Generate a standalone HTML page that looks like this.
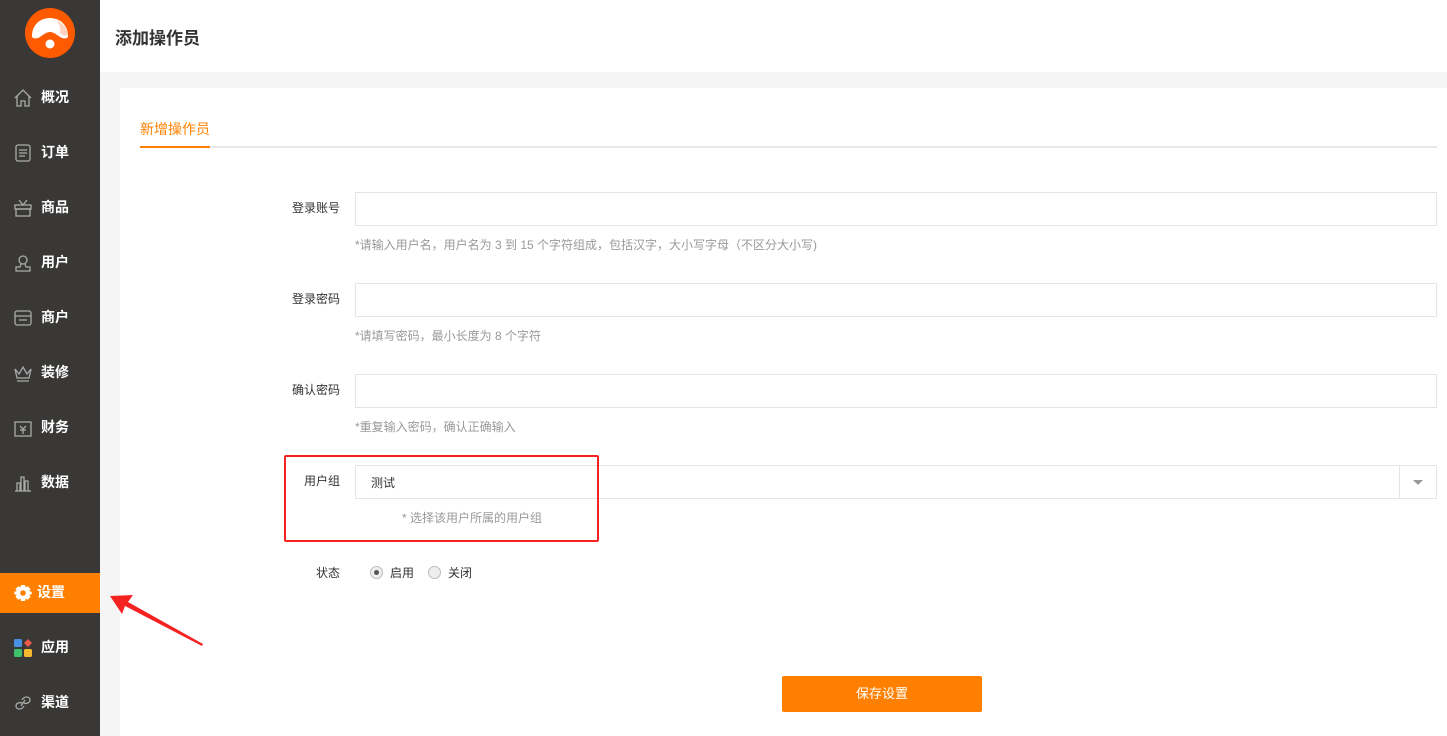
<!DOCTYPE html>
<html><head><meta charset="utf-8"><style>
*{margin:0;padding:0;box-sizing:border-box}
body{width:1447px;height:736px;overflow:hidden;font-family:"Liberation Sans","Noto Sans CJK SC",sans-serif;background:#f5f5f5;position:relative;font-size:12px;color:#333}
.side{position:absolute;left:0;top:0;width:100px;height:736px;background:#393836}
.logo{position:absolute;left:25px;top:8px;width:50px;height:50px;border-radius:50%;background:#ff5a00}
.nav{position:absolute;left:0;width:100px;height:40px;color:#fff;font-size:14px;font-weight:bold;line-height:40px}
.nav span{position:absolute;left:41px;top:-1px}
.nav svg{position:absolute;left:14px;top:11px}
.act{background:#ff8000}
.hdr{position:absolute;left:100px;top:0;right:0;height:72px;background:#fff}
.hdr h1{position:absolute;left:15px;top:24px;font-size:17px;font-weight:bold;color:#333}
.card{position:absolute;left:120px;top:88px;right:0;bottom:0;background:#fff}
.abs{position:absolute}
.lbl{position:absolute;width:100px;text-align:right;left:240px;font-size:12px;color:#333}
.inp{position:absolute;left:355px;width:1082px;height:34px;border:1px solid #e5e5e5;background:#fff}
.hint{position:absolute;left:355px;font-size:12px;color:#999}
.radio{display:inline-block;width:13px;height:13px;border:1px solid #bbb;border-radius:50%;background:#eee;vertical-align:-2px;margin-right:7px;position:relative}
</style></head><body>
<div class="side">
<div class="logo"><svg width="50" height="50" viewBox="0 0 50 50"><path d="M7 28 C7 17 15 10 25 10 C35 10 43 17 43 28 C43 31 38 31 35 29 C31 26 28 24 25 24 C22 24 19 26 15 29 C12 31 7 31 7 28Z" fill="#fff"/><path d="M31 12 C38 15 42 20 43 27 C40 28 37 27 35 25 C36 20 34 15 31 12Z" fill="#ffd3c0"/><circle cx="25" cy="36" r="4.5" fill="#fff"/></svg></div>
<div class="nav" style="top:78px"><svg width="18" height="18" viewBox="0 0 18 18" fill="none" stroke="#aaa" stroke-width="1.3"><path d="M1 9 L9 1 L17 9 M3 7 V17 H7 V12 H11 V17 H15 V7"/></svg><span>概况</span></div>
<div class="nav" style="top:133px"><svg width="18" height="18" viewBox="0 0 18 18" fill="none" stroke="#aaa" stroke-width="1.3"><rect x="2" y="1" width="14" height="16" rx="2"/><path d="M5 6h8M5 9h8M5 12h6"/></svg><span>订单</span></div>
<div class="nav" style="top:188px"><svg width="18" height="18" viewBox="0 0 18 18" fill="none" stroke="#aaa" stroke-width="1.3"><rect x="1" y="6" width="16" height="4"/><rect x="2" y="10" width="14" height="7"/><path d="M9 6 L5 1 M9 6 L13 1"/></svg><span>商品</span></div>
<div class="nav" style="top:243px"><svg width="18" height="18" viewBox="0 0 18 18" fill="none" stroke="#aaa" stroke-width="1.3"><circle cx="9" cy="6" r="4"/><path d="M7 10 L6 13 H2 V17 H16 V13 H12 L11 10"/></svg><span>用户</span></div>
<div class="nav" style="top:298px"><svg width="18" height="18" viewBox="0 0 18 18" fill="none" stroke="#aaa" stroke-width="1.3"><rect x="1" y="2" width="16" height="14" rx="2"/><path d="M1 7h16M5 11h8"/></svg><span>商户</span></div>
<div class="nav" style="top:353px"><svg width="18" height="18" viewBox="0 0 18 18" fill="none" stroke="#aaa" stroke-width="1.3"><path d="M1 5 L5 10 L9 3 L13 10 L17 5 L15 14 H3Z M3 17h12"/></svg><span>装修</span></div>
<div class="nav" style="top:408px"><svg width="18" height="18" viewBox="0 0 18 18" fill="none" stroke="#aaa" stroke-width="1.3"><rect x="1" y="3" width="16" height="14"/><path d="M6 7 L9 10 L12 7 M9 10 V15 M6 11h6"/></svg><span>财务</span></div>
<div class="nav" style="top:463px"><svg width="18" height="18" viewBox="0 0 18 18" fill="none" stroke="#aaa" stroke-width="1.3"><path d="M1 17h16M3 17V9h3v8M7 17V3h3v14M11 17V7h3v10"/></svg><span>数据</span></div>
<div class="nav act" style="top:573px"><svg width="18" height="18" viewBox="0 0 18 18"><path fill="#fff" d="M7 1h4l.6 2.4 2.1-1.2 2.8 2.8-1.2 2.1L17.7 7.7v2.6l-2.4.6 1.2 2.1-2.8 2.8-2.1-1.2L11 17H7l-.6-2.4-2.1 1.2-2.8-2.8 1.2-2.1L.3 10.3V7.7l2.4-.6-1.2-2.1 2.8-2.8 2.1 1.2z"/><circle cx="9" cy="9" r="2.8" fill="#ff8000"/></svg><span style="left:37px">设置</span></div>
<div class="nav" style="top:628px"><svg width="18" height="18" viewBox="0 0 18 18"><rect x="0" y="0" width="8" height="8" rx="1.5" fill="#4a90e2"/><path d="M14 0 L18 4 L14 8 L10 4Z" fill="#f05a4a"/><rect x="0" y="10" width="8" height="8" rx="1.5" fill="#3cc06a"/><rect x="10" y="10" width="8" height="8" rx="1.5" fill="#f5b82e"/></svg><span>应用</span></div>
<div class="nav" style="top:683px"><svg width="18" height="18" viewBox="0 0 18 18" fill="none" stroke="#aaa" stroke-width="1.3"><path d="M8 6 C10 2 16 2 16 6 C16 9 12 10 10 9 M10 12 C8 16 2 16 2 12 C2 9 6 8 8 9 M7 12 L11 6"/></svg><span>渠道</span></div>
</div>
<div class="hdr"><h1>添加操作员</h1></div>
<div class="card"></div>
<div class="abs" style="left:140px;top:119px;font-size:14px;color:#ff8000">新增操作员</div>
<div class="abs" style="left:140px;top:146px;width:1297px;height:2px;background:#e6e8ee"></div>
<div class="abs" style="left:140px;top:146px;width:70px;height:2px;background:#ff8000"></div>

<div class="lbl" style="top:199px">登录账号</div>
<div class="inp" style="top:192px"></div>
<div class="hint" style="top:236px">*请输入用户名，用户名为 3 到 15 个字符组成，包括汉字，大小写字母（不区分大小写)</div>

<div class="lbl" style="top:290px">登录密码</div>
<div class="inp" style="top:283px"></div>
<div class="hint" style="top:327px">*请填写密码，最小长度为 8 个字符</div>

<div class="lbl" style="top:381px">确认密码</div>
<div class="inp" style="top:374px"></div>
<div class="hint" style="top:418px">*重复输入密码，确认正确输入</div>

<div class="lbl" style="top:472px">用户组</div>
<div class="inp" style="top:465px"><span class="abs" style="left:15px;top:8px;color:#333">测试</span><div class="abs" style="left:1043px;top:0;width:1px;height:32px;background:#e5e5e5"></div><div class="abs" style="left:1057px;top:14px;border:5px solid transparent;border-top:5px solid #999"></div></div>
<div class="hint" style="top:509px;left:402px">* 选择该用户所属的用户组</div>
<div class="abs" style="left:284px;top:455px;width:315px;height:87px;border:2px solid #f52222;border-radius:2px"></div>

<div class="lbl" style="top:564px">状态</div>
<div class="abs" style="left:370px;top:564px"><span class="radio"><span class="abs" style="left:3px;top:3px;width:5px;height:5px;border-radius:50%;background:#555"></span></span>启用<span class="radio" style="margin-left:14px"></span>关闭</div>

<div class="abs" style="left:782px;top:676px;width:200px;height:36px;background:#ff8000;border-radius:2px;color:#fff;font-size:13px;text-align:center;line-height:35px">保存设置</div>

<svg class="abs" style="left:105px;top:590px" width="105" height="60" viewBox="0 0 105 60"><path d="M5 6 L28 5 L23 12 L98 54 L97 56 L20 16 L17 24Z" fill="#f52222"/></svg>
</body></html>
